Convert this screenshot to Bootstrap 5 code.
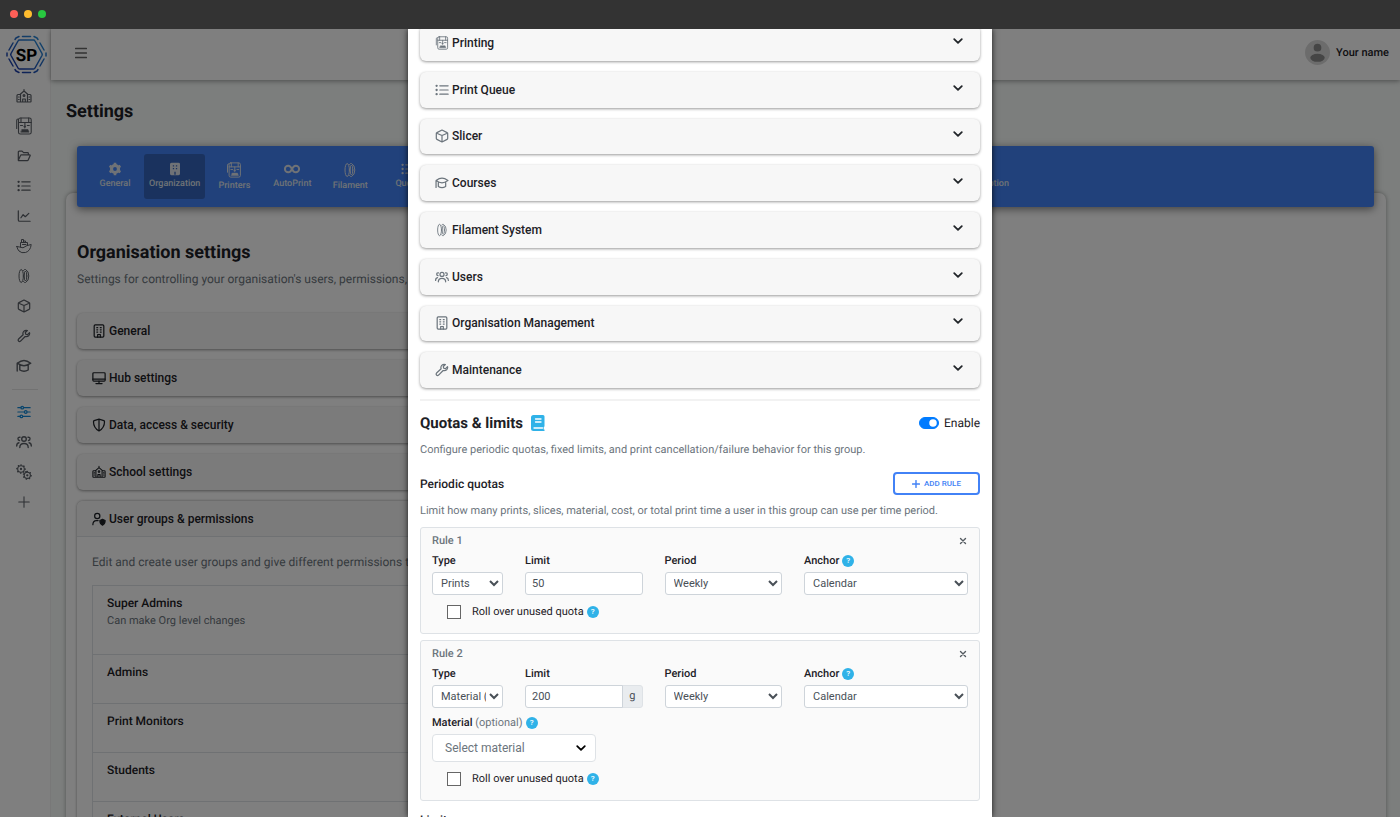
<!DOCTYPE html>
<html lang="en">
<head>
<meta charset="utf-8">
<meta name="viewport" content="width=device-width, initial-scale=1">
<title>Settings</title>
<link href="https://cdn.jsdelivr.net/npm/bootstrap@5.3.0/dist/css/bootstrap.min.css" rel="stylesheet">
<style>
  :root { --ink: #1d2126; --soft: #6c757d; --line: #dee2e6; --sky: #2fb2e8; --brand: #4282f6; }
  body { font-family: Roboto, "Liberation Sans", sans-serif; font-size: 12px; line-height: 16px; color: var(--ink); background: #333; text-rendering: geometricPrecision; }
  .shell { height: 100vh; }
  .titlebar { height: 29px; padding: 0 0 1px 10px; gap: 6px; background: #333; }
  .dot { width: 8px; height: 8px; border-radius: 50%; }
  .stage { min-height: 0; }
  svg { display: block; fill: none; stroke: currentColor; stroke-width: 1.4; stroke-linecap: round; stroke-linejoin: round; flex: none; }
  .i12 { width: 12px; height: 12px; } .i14 { width: 14px; height: 14px; } .i16 { width: 16px; height: 16px; }
  .solid { fill: currentColor; }
  .no-line { stroke: none; }

  .rail { width: 51px; background: #fff; border-right: 1px solid #f1f1f1; color: #5a5f66; flex: none; padding-right: 3px; }
  .brandmark { margin: 5px 0 6px 6px; width: 41px; height: 41px; }
  .brandmark text { fill: #000; stroke: none; font: 700 17px Roboto, sans-serif; }
  .rail a { height: 30px; color: inherit; display: flex; align-items: center; justify-content: center; }
  .rail hr { margin: 8px 9px 7px 12px; border-color: #999; }
  .rail a.current { color: #1289d8; }

  .page { background: #f8fcfa; }
  .topbar { height: 51px; background: #fff; box-shadow: 0 1px 5px rgba(0,0,0,.4); padding: 0 11px 4px 24px; position: relative; flex: none; }
  .avatar { width: 25px; height: 25px; }
  .user-name { font-size: 11px; font-weight: 500; gap: 6px; }
  .title-lg { font-size: 18px; line-height: 24px; font-weight: 700; margin: 0; }
  .content { padding: 20px 14px 0 15px; }
  .tabs { background: var(--brand); border-radius: 3px; margin: 22px 12px 0 11px; padding: 8px 9px; height: 61px; box-shadow: 0 2px 8px rgba(0,0,0,.5); position: relative; z-index: 1; }
  .tabs ul { width: 928px; }
  .tabs a { min-width: 58px; height: 45px; padding: 8px 5px 0; color: #dfe4ec; font-size: 9px; line-height: 15px; font-weight: 500; text-align: center; text-decoration: none; display: flex; flex-direction: column; align-items: center; gap: 1px; border-radius: 3px; }
  .tabs a.active { background: #3465bd; }
  .sheet { background: #fff; margin-top: -14px; border-radius: 7px; box-shadow: 0 0 4px rgba(0,0,0,.35); padding: 48px 12px 0 11px; min-height: 700px; }
  .lede { color: var(--soft); margin: 0; }

  .fold { background: #f7f7f7; min-height: 0; border: 0; border-radius: 6px; box-shadow: 0 1px 3px rgba(0,0,0,.4); padding: 0 16px 0 15px; font-weight: 500; color: var(--ink); width: 100%; text-align: left; gap: 3px; }
  .stack { display: flex; flex-direction: column; gap: 11px; width: 60%; margin-top: 26px; }
  .stack .fold { height: 36px; }
  .perm-stack { display: grid; grid-auto-rows: 1fr; gap: 11px; height: 363px; margin-top: -4px; }
  .panel { border-radius: 6px 6px 0 0; background: #fff; box-shadow: 0 0 3px rgba(0,0,0,.4); }
  .panel .fold { box-shadow: none; border-bottom: 1px solid var(--line); border-radius: 6px 6px 0 0; }
  .panel-in { padding: 17px 15px 0; }
  .groups { border: 1px solid var(--line); margin-top: 15px; }
  .groups li { padding: 9px 14px 23px; border-bottom: 1px solid var(--line); font-weight: 500; }
  .groups small { display: block; font-size: 11px; font-weight: 400; color: var(--soft); line-height: 20px; }

  .veil { background: rgba(0,0,0,.5); inset: 0; z-index: 5; }
  .sheet-modal { width: 584px; max-width: 100%; background: #fff; padding: 0 12px; overflow: hidden; box-shadow: 0 0 6px rgba(0,0,0,.8); }
  .sheet-modal .fold svg { color: #6c757d; }
  .sheet-modal .fold .chev { color: #212529; stroke-width: 1.8; margin-bottom: 4px; }
  .bold-chev { color: #000; stroke-width: 1.8; }
  .rule-off { margin: 11px 0 0; border-top: 2px solid #f2f2f2; opacity: 1; }
  .title-md { font-size: 15px; line-height: 20px; font-weight: 700; margin: 0; }
  .title-sm { font-size: 12px; line-height: 16px; font-weight: 500; margin: 0; }
  .note { font-size: 11px; color: var(--soft); margin: 0; }
  .form-switch { gap: 5px; min-height: 0; }
  .form-switch .form-check-input { width: 20px; height: 12px; margin: 0; float: none; box-shadow: none; }
  .form-switch .form-check-input:checked { background-color: #007bff; border-color: #007bff; }
  .add { width: 87px; height: 23px; border: 2px solid var(--brand); border-radius: 4px; background: #fff; color: var(--brand); font-size: 8px; font-weight: 500; padding: 0; gap: 4px; }
  .quota { border: 1px solid var(--line); border-radius: 3px; background: #fafafa; padding: 5px 11px 13px; font-size: 11px; }
  .quota h4 { font-size: 11px; line-height: 16px; font-weight: 500; color: var(--soft); margin: 0; }
  .quota .row { --bs-gutter-x: 22px; }
  .quota .caption { font-weight: 500; line-height: 16px; display: flex; align-items: center; gap: 3px; margin: 4px 0 3px; }
  .quota .form-control { font-size: 11px; line-height: 16px; height: 23px; min-height: 0; padding: 0 6px; border-color: #ced4da; border-radius: 3px; color: #495057; }
  .quota select.form-control { appearance: auto; padding: 0 0 0 4px; }
  .quota .input-group-text { font-size: 11px; padding: 0 6px; background: #e9ecef; border-radius: 3px; color: #495057; }
  .help { width: 12px; height: 12px; border: 0; padding: 0; border-radius: 50%; background: var(--sky); color: #fff; font-size: 8px; line-height: 12px; text-align: center; font-weight: 500; }
  .close-x { border: 0; background: none; padding: 0; color: #555b61; }
  .roll { gap: 3px; margin: 9px 0 0 15px; height: 16px; }
  .roll input { appearance: none; width: 14px; height: 14px; border: 1px solid #666; outline: 0; background: #fff; margin: 0 8px 0 0; }
  .picker { width: 164px; height: 28px; border: 1px solid var(--line); border-radius: 4px; background: #fff; color: var(--soft); font-size: 12px; padding: 0 8px 0 12px; }
</style>
</head>
<body>
<svg width="0" height="0" class="position-absolute" aria-hidden="true">
  <linearGradient id="mark" x1="0" y1="1" x2="1" y2="0"><stop offset="0" stop-color="#1a2fa0"/><stop offset="1" stop-color="#2a95e0"/></linearGradient>
  <symbol id="school" viewBox="0 0 16 16"><g stroke-width="1.200"><path d="M1 13.500v-6q0-1 1-1h2L8 3l4 3.500h2q1 0 1 1v6q0 .500-.500.500h-13q-.500 0-.500-.500zM4.500 6.500V14M11.500 6.500V14M6.700 14v-3h2.600v3M2.500 9h.600M2.500 11.500h.600M13 9h.600M13 11.500h.600M8 3V1.500"/><circle cx="8" cy="7.500" r=".900"/></g></symbol>
  <symbol id="printer" viewBox="0 0 16 18"><g stroke-width="1.100"><rect x="2.500" y="1" width="12.700" height="16" rx="1.800"/><path d="M2 2Q.700 2 .700 3.500v8M2.500 5.500h12.700M5 1v4.500M12.700 1v4.500M8.900 5.500v4.500M4.500 8.500h2M11.300 8.500h2"/><path class="solid" stroke-width=".500" d="M8 9h1.800l-.900 2zM6 12.500h6l1 2.700H5z"/></g></symbol>
  <symbol id="folder" viewBox="0 0 16 16"><path d="M1.500 12.500v-9q0-1 1-1h3.300l1.700 1.700h4.500q1 0 1 1v1.600M1.500 12.800 4 7.500q.300-.700 1-.700h9.500q.900 0 .500.800l-2.200 5q-.300.700-1 .700H2q-.500 0-.500-.500z"/></symbol>
  <symbol id="list" viewBox="0 0 16 16"><path d="M5.500 3.200H15M5.500 8H15M5.500 12.800H15"/><path stroke-width="2.600" d="M1.800 3.200h.100M1.800 8h.100M1.800 12.800h.100"/></symbol>
  <symbol id="chart" viewBox="0 0 16 16"><path d="M1.500 2v10.500q0 1.500 1.500 1.500h12M4.500 10 7 6.500l2.500 2.300L13.500 5"/></symbol>
  <symbol id="ship" viewBox="0 0 16 16"><g stroke-width="1"><path d="M.800 8.500Q4 9 7 9.800 11 7 15.200 6.500 14.500 13 9.500 14.500q-4 1-6.500-1.500Q1.500 11.500.800 8.500zM4.500 9V4.500h7v3M5.500 4.500v-3h2v3M7.500 3h2v1.500M6.500 6.500h3.500"/></g></symbol>
  <symbol id="spool" viewBox="0 0 16 16"><g stroke-width="1"><ellipse cx="5.200" cy="8" rx="2.200" ry="6.500"/><path d="M7.500 2.500Q8.500 1 9.500 1.500 12.800 3 12.800 8T9.500 14.500Q8.500 15 7.500 13.500"/><ellipse cx="9.500" cy="8" rx="1.300" ry="5"/></g></symbol>
  <symbol id="box" viewBox="0 0 16 16"><path d="m8 1.200 5.800 2.900q.700.300.700 1v5.800q0 .700-.700 1L8 14.800l-5.800-2.900q-.700-.300-.700-1V5.100q0-.700.700-1zM2 4.800l6 2.700 6-2.700M8 7.500v7"/></symbol>
  <symbol id="wrench" viewBox="0 0 16 16"><path d="M14.300 4.200 12 6.500l-2-.500-.500-2 2.300-2.300Q9.500.900 7.700 2.700 6.200 4.200 7 6.600L1.800 11.500q-1 1.200 0 2.300t2.300 0l5.200-5.200q2.400.700 4-.900 1.600-1.700 1-3.500z"/></symbol>
  <symbol id="cap" viewBox="0 0 16 16"><path d="M1.200 5.200Q5 2.500 8 2.500t6.800 2.700Q11 7.800 8 7.800T1.200 5.200zV13M3.800 7v5q4.200 2.500 8.400 0V7"/></symbol>
  <symbol id="sliders" viewBox="0 0 16 16"><path d="M1 3h3.500M7.500 3H15M1 8h7.500M11.500 8H15M1 13h2.500M6.500 13H15"/><circle cx="6" cy="3" r="1.500"/><circle cx="10" cy="8" r="1.500"/><circle cx="5" cy="13" r="1.500"/></symbol>
  <symbol id="users" viewBox="0 0 16 16"><circle cx="8" cy="5" r="2.300"/><path d="M3.800 13.500q0-4 4.200-4t4.200 4M4 3.200q-2-.200-2 1.600 0 1.500 1.500 1.700M12 3.200q2-.200 2 1.600 0 1.500-1.500 1.700M.700 12q0-2.800 2.200-3.200M15.300 12q0-2.800-2.200-3.200"/></symbol>
  <symbol id="gears" viewBox="0 0 16 16"><g stroke-width="1.100"><circle cx="5" cy="5" r="3.300"/><circle cx="5" cy="5" r=".600"/><circle cx="11.300" cy="11.300" r="3.100"/><circle cx="11.300" cy="11.300" r=".600"/></g><path stroke-width="1.500" stroke-dasharray=".1 3.100" d="M5 .900a4.100 4.100 0 1 1 0 8.200 4.100 4.100 0 0 1 0-8.200M11.300 7.400a3.900 3.900 0 1 1 0 7.800 3.900 3.900 0 0 1 0-7.800"/></symbol>
  <symbol id="plus" viewBox="0 0 16 16"><path d="M8 1v14M1 8h14"/></symbol>
  <symbol id="building" viewBox="0 0 16 16"><rect x="2.500" y="1" width="11" height="14" rx="1.200"/><path d="M6.500 15v-3h3v3M5.500 4.200h1M9.500 4.200h1M5.500 6.700h1M9.500 6.700h1M5.500 9.200h1M9.500 9.200h1"/></symbol>
  <symbol id="monitor" viewBox="0 0 16 16"><rect x="1" y="2" width="14" height="9.500" rx="1"/><path d="M1 9.300h14M8 11.500V14M4.500 14.300h7"/></symbol>
  <symbol id="shield" viewBox="0 0 16 16"><path d="M8 1.200 13.500 3q.800.300.800 1.200 0 7-6.300 10.600Q1.700 11.200 1.700 4.200q0-.9.800-1.200zM8 1.200v13.600"/></symbol>
  <symbol id="usershield" viewBox="0 0 16 16"><circle cx="6" cy="4.500" r="3"/><path d="M1 14.500q0-4.500 4-4.700h2"/><path class="solid" d="m12 8.500 3 1.200q0 3.800-3 5.300-3-1.500-3-5.300z"/></symbol>
  <symbol id="chev" viewBox="0 0 12 12"><path d="m2.200 4.200 3.800 3.600 3.800-3.600"/></symbol>
</svg>

<div class="shell d-flex flex-column overflow-hidden">
  <header class="titlebar d-flex align-items-center flex-shrink-0">
    <span class="dot" style="background:#ff5f57"></span><span class="dot" style="background:#febc2e"></span><span class="dot" style="background:#28c840"></span>
  </header>

  <div class="stage flex-fill position-relative overflow-hidden d-flex">
    <nav class="rail" aria-label="Main">
      <svg class="brandmark" viewBox="0 0 41 41"><g stroke="url(#mark)" stroke-width="1.500"><path d="M13.500 6h14q1 0 1.500 1l7 12.500q.500 1 0 2L29 34q-.500 1-1.500 1h-14q-1 0-1.500-1L5 21.500q-.500-1 0-2L12 7q.500-1 1.500-1z"/><path d="M16.500 2.500h8M28 2.500l3 1.500 1 1.500M34 9l4 7M40 19v3M38 25l-4 7M32 35.500 31 37l-3 1.500M24.500 38.500h-8M13 38.500 10 37l-1-1.500M7 32l-4-7M1 22v-3M3 16l4-7M9 5.500 10 4l3-1.500"/></g><text x="20.500" y="26.500" text-anchor="middle">SP</text></svg>
      <a href="#" aria-label="Home"><svg class="i16"><use href="#school"/></svg></a>
      <a href="#" aria-label="Printers"><svg width="16" height="18"><use href="#printer"/></svg></a>
      <a href="#" aria-label="Files"><svg class="i14"><use href="#folder"/></svg></a>
      <a href="#" aria-label="Queue"><svg class="i14"><use href="#list"/></svg></a>
      <a href="#" aria-label="Statistics"><svg class="i14"><use href="#chart"/></svg></a>
      <a href="#" aria-label="Harbour"><svg class="i16"><use href="#ship"/></svg></a>
      <a href="#" aria-label="Filament"><svg class="i16"><use href="#spool"/></svg></a>
      <a href="#" aria-label="Slicer"><svg class="i14"><use href="#box"/></svg></a>
      <a href="#" aria-label="Maintenance"><svg class="i14"><use href="#wrench"/></svg></a>
      <a href="#" aria-label="Courses"><svg class="i16"><use href="#cap"/></svg></a>
      <hr>
      <a href="#" class="current" aria-label="Settings"><svg class="i14"><use href="#sliders"/></svg></a>
      <a href="#" aria-label="Users"><svg class="i16"><use href="#users"/></svg></a>
      <a href="#" aria-label="Integrations"><svg class="i16"><use href="#gears"/></svg></a>
      <a href="#" aria-label="Add"><svg class="i12"><use href="#plus"/></svg></a>
    </nav>

    <div class="page flex-fill d-flex flex-column">
      <div class="topbar d-flex align-items-center justify-content-between">
        <svg class="i12" viewBox="0 0 12 12" style="color:#666"><path d="M.600 1.500h10.800M.600 6h10.800M.600 10.500h10.800"/></svg>
        <div class="user-name d-flex align-items-center"><svg class="avatar no-line" viewBox="0 0 26 26"><circle cx="13" cy="13" r="13" fill="#d9d9d9"/><circle cx="13" cy="8" r="4" fill="#8a8a8a"/><ellipse cx="13" cy="18.500" rx="7.500" ry="4.200" fill="#8a8a8a"/></svg><span>Your name</span></div>
      </div>
      <main class="content">
        <h1 class="title-lg">Settings</h1>
        <nav class="tabs" aria-label="Settings sections">
          <ul class="list-unstyled d-flex m-0">
            <li><a href="#"><svg class="i14" viewBox="0 0 16 16"><circle cx="8" cy="8" r="4" stroke-width="3.600"/><path stroke-width="3" stroke-linecap="butt" d="M8 .800v3M8 12.200v3M1.800 4.400l2.500 1.500M11.700 10.100l2.500 1.500M1.800 11.600l2.500-1.500M11.700 5.900l2.500-1.500"/></svg>General</a></li>
            <li><a href="#" class="active"><svg class="i14" viewBox="0 0 16 16"><rect class="solid" x="3" y="1.500" width="10" height="13" rx="1"/><path stroke="#3465bd" stroke-width="1.500" stroke-linecap="butt" d="M5.500 4.500H7M9 4.500h1.500M5.500 7.500H7M9 7.500h1.500M8 11v3.500"/></svg>Organization</a></li>
            <li><a href="#"><svg class="i16"><use href="#printer"/></svg>Printers</a></li>
            <li><a href="#"><svg width="16" height="14" viewBox="0 0 16 14"><path stroke-width="1.900" d="M8 7Q6.500 3.700 4.200 3.700A3.200 3.200 0 0 0 4.200 10.300Q6.500 10.300 8 7t3.800-3.300a3.200 3.200 0 0 1 0 6.600Q9.500 10.300 8 7z"/></svg>AutoPrint</a></li>
            <li><a href="#"><svg class="i16"><use href="#spool"/></svg>Filament</a></li>
            <li><a href="#"><svg class="i14"><use href="#list"/></svg>Queue</a></li>
            <li class="ms-auto"><a href="#"><svg class="i14" viewBox="0 0 16 16"><rect x="1" y="3" width="14" height="10" rx="1"/></svg>Subscription</a></li>
          </ul>
        </nav>
        <section class="sheet">
          <h2 class="title-lg">Organisation settings</h2>
          <p class="lede" style="margin-top:6px">Settings for controlling your organisation's users, permissions, restrictions</p>
          <div class="stack">
            <button class="fold d-flex align-items-center"><svg class="i14"><use href="#building"/></svg>General</button>
            <button class="fold d-flex align-items-center"><svg class="i14"><use href="#monitor"/></svg>Hub settings</button>
            <button class="fold d-flex align-items-center"><svg class="i14"><use href="#shield"/></svg>Data, access &amp; security</button>
            <button class="fold d-flex align-items-center"><svg class="i14"><use href="#school"/></svg>School settings</button>
            <div class="panel">
              <button class="fold d-flex align-items-center"><svg class="i14"><use href="#usershield"/></svg>User groups &amp; permissions</button>
              <div class="panel-in">
                <p class="lede">Edit and create user groups and give different permissions to users</p>
                <ul class="groups list-unstyled mb-0">
                  <li>Super Admins<small>Can make Org level changes</small></li>
                  <li>Admins</li>
                  <li>Print Monitors</li>
                  <li>Students</li>
                  <li>External Users</li>
                </ul>
              </div>
            </div>
          </div>
        </section>
      </main>
    </div>

    <div class="veil position-absolute d-flex justify-content-center">
      <div class="sheet-modal" role="dialog" aria-label="Group permissions">
        <div class="perm-stack">
          <button class="fold d-flex align-items-center"><svg class="i14"><use href="#printer"/></svg><span class="flex-fill">Printing</span><svg class="chev i12"><use href="#chev"/></svg></button>
          <button class="fold d-flex align-items-center"><svg class="i14"><use href="#list"/></svg><span class="flex-fill">Print Queue</span><svg class="chev i12"><use href="#chev"/></svg></button>
          <button class="fold d-flex align-items-center"><svg class="i14"><use href="#box"/></svg><span class="flex-fill">Slicer</span><svg class="chev i12"><use href="#chev"/></svg></button>
          <button class="fold d-flex align-items-center"><svg class="i14"><use href="#cap"/></svg><span class="flex-fill">Courses</span><svg class="chev i12"><use href="#chev"/></svg></button>
          <button class="fold d-flex align-items-center"><svg class="i14"><use href="#spool"/></svg><span class="flex-fill">Filament System</span><svg class="chev i12"><use href="#chev"/></svg></button>
          <button class="fold d-flex align-items-center"><svg class="i14"><use href="#users"/></svg><span class="flex-fill">Users</span><svg class="chev i12"><use href="#chev"/></svg></button>
          <button class="fold d-flex align-items-center"><svg class="i14"><use href="#building"/></svg><span class="flex-fill">Organisation Management</span><svg class="chev i12"><use href="#chev"/></svg></button>
          <button class="fold d-flex align-items-center"><svg class="i14"><use href="#wrench"/></svg><span class="flex-fill">Maintenance</span><svg class="chev i12"><use href="#chev"/></svg></button>
        </div>
        <hr class="rule-off">
        <div class="d-flex align-items-center justify-content-between" style="margin-top:12px">
          <div class="d-flex align-items-center gap-2"><h2 class="title-md">Quotas &amp; limits</h2>
            <svg class="no-line" width="14" height="16" viewBox="0 0 14 16"><path fill="#2fb2e8" d="M2.500 0H12q1.500 0 1.500 1.500v9.500q0 .800-.800 1v2.500h.800V16h-11Q0 16 0 13.500v-11Q0 0 2.500 0z"/><path stroke="#fff" stroke-width="1.300" d="M4.500 4h5.500M4.500 7h5.500M3 13h8.500"/></svg></div>
          <div class="form-check form-switch d-flex align-items-center p-0 m-0"><input class="form-check-input" type="checkbox" role="switch" id="enable" checked><label for="enable">Enable</label></div>
        </div>
        <p class="note" style="margin-top:9px">Configure periodic quotas, fixed limits, and print cancellation/failure behavior for this group.</p>
        <div class="d-flex align-items-center justify-content-between" style="margin-top:14px">
          <h3 class="title-sm">Periodic quotas</h3>
          <button class="add d-flex align-items-center justify-content-center"><svg width="8" height="8" viewBox="0 0 8 8"><path d="M4 .600v6.800M.600 4h6.800"/></svg>ADD RULE</button>
        </div>
        <p class="note" style="margin-top:8px">Limit how many prints, slices, material, cost, or total print time a user in this group can use per time period.</p>

        <section class="quota" style="margin-top:8px">
          <div class="d-flex align-items-center justify-content-between"><h4>Rule 1</h4><button class="close-x" aria-label="Remove rule 1"><svg width="10" height="8" viewBox="0 0 10 8"><path d="m2.500 1.500 5 5m0-5-5 5"/></svg></button></div>
          <div class="row">
            <div class="col-2"><label class="caption" for="t1">Type</label><select class="form-control" id="t1"><option>Prints</option></select></div>
            <div class="col-3"><label class="caption" for="l1">Limit</label><input class="form-control" id="l1" value="50"></div>
            <div class="col-3"><label class="caption" for="p1">Period</label><select class="form-control" id="p1"><option>Weekly</option></select></div>
            <div class="col-4"><div class="caption"><label for="a1">Anchor</label><button class="help">?</button></div><select class="form-control" id="a1"><option>Calendar</option></select></div>
          </div>
          <div class="roll d-flex align-items-center"><input type="checkbox" id="r1"><label for="r1">Roll over unused quota</label><button class="help">?</button></div>
        </section>

        <section class="quota" style="margin-top:6px">
          <div class="d-flex align-items-center justify-content-between"><h4>Rule 2</h4><button class="close-x" aria-label="Remove rule 2"><svg width="10" height="8" viewBox="0 0 10 8"><path d="m2.500 1.500 5 5m0-5-5 5"/></svg></button></div>
          <div class="row">
            <div class="col-2"><label class="caption" for="t2">Type</label><select class="form-control" id="t2"><option>Material (g)</option></select></div>
            <div class="col-3"><label class="caption" for="l2">Limit</label><div class="input-group flex-nowrap"><input class="form-control" id="l2" value="200"><span class="input-group-text">g</span></div></div>
            <div class="col-3"><label class="caption" for="p2">Period</label><select class="form-control" id="p2"><option>Weekly</option></select></div>
            <div class="col-4"><div class="caption"><label for="a2">Anchor</label><button class="help">?</button></div><select class="form-control" id="a2"><option>Calendar</option></select></div>
          </div>
          <div class="caption" style="margin-top:7px"><label for="m2">Material <span class="fw-normal" style="color:#6c757d">(optional)</span></label><button class="help">?</button></div>
          <button class="picker d-flex align-items-center justify-content-between" id="m2">Select material<svg class="i12 bold-chev"><use href="#chev"/></svg></button>
          <div class="roll d-flex align-items-center"><input type="checkbox" id="r2"><label for="r2">Roll over unused quota</label><button class="help">?</button></div>
        </section>
        <h3 class="title-sm" style="margin-top:11px">Limits</h3>
      </div>
    </div>
  </div>
</div>
<script src="https://cdn.jsdelivr.net/npm/bootstrap@5.3.0/dist/js/bootstrap.bundle.min.js"></script>
</body>
</html>
